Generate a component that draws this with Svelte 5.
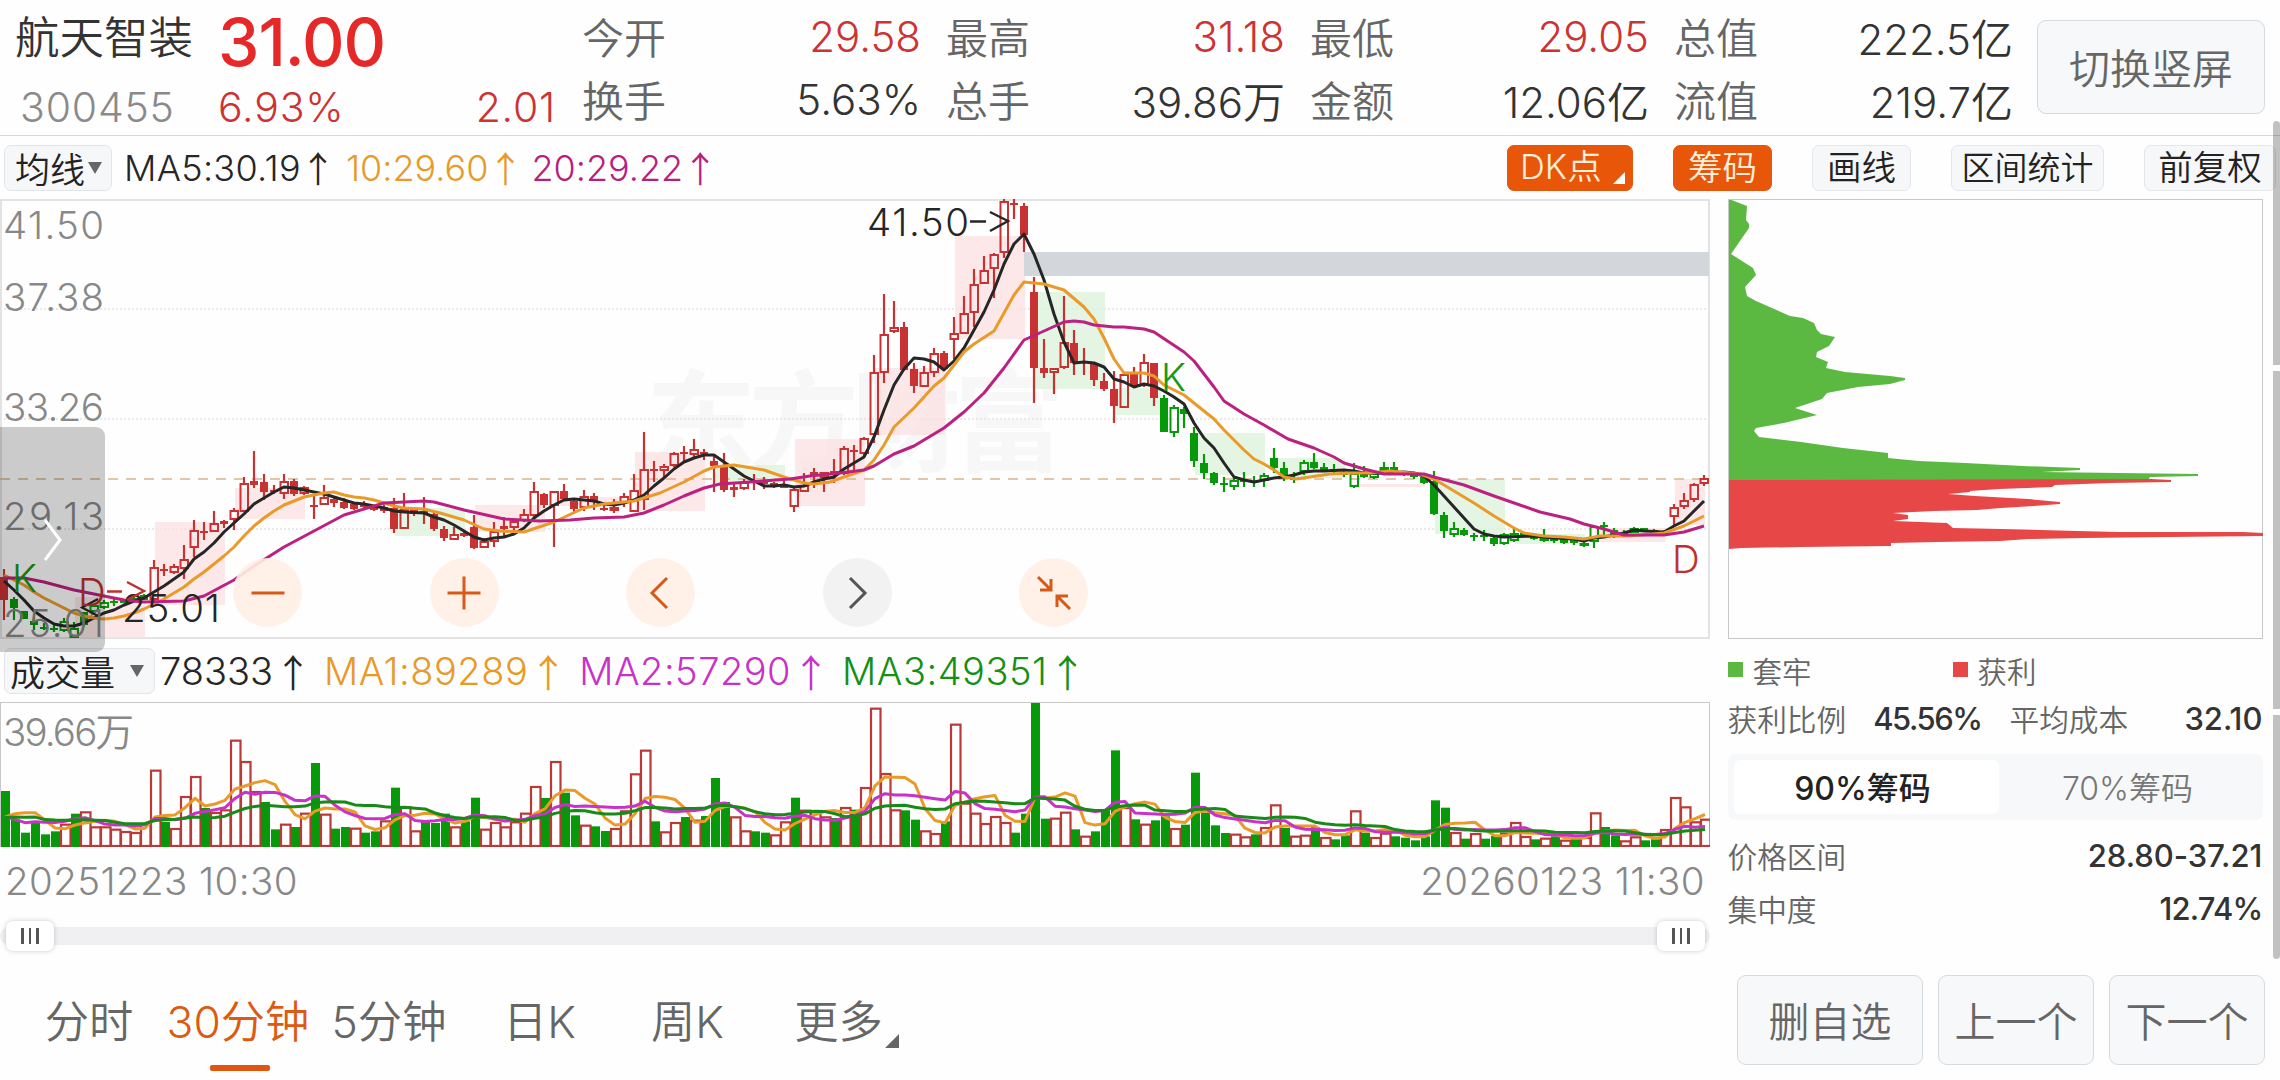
<script>
	const quotes = [
		{ rows: [['今开', '29.58', 'up'], ['换手', '5.63%', '']] },
		{ rows: [['最高', '31.18', 'up'], ['总手', '39.86万', '']] },
		{ rows: [['最低', '29.05', 'up'], ['金额', '12.06亿', '']] },
		{ rows: [['总值', '222.5亿', ''], ['流值', '219.7亿', '']] }
	];

	const tabs = ['分时', '30分钟', '5分钟', '日K', '周K', '更多'];
	let active = '30分钟';

	// high, body top, body bottom, low, kind
	// R/G - hollow body, r/g - filled body
	const candleData = `569 577 600 620 r|597 599 608 620 g|611 611 619 619 g|617 621 625 630 g|623 627 629 630 g|625 628 630 632 g|618 621 631 632 G|622 628 638 638 G|612 612 625 626 g|604 605 612 613 G
600 602 608 609 G|599 601 603 606 g|599 600 603 603 g|597 598 602 602 g|594 595 600 600 g|560 567 600 601 R|564 569 571 576 r|564 566 573 574 R|545 559 569 579 R|520 530 548 557 R
522 531 533 540 r|511 523 532 532 R|520 521 524 528 r|508 510 520 530 R|477 483 512 512 R|451 481 485 488 r|474 482 492 500 r|485 490 492 494 r|474 481 494 499 R|479 481 494 496 r
486 487 494 495 R|495 505 507 519 r|485 497 505 505 R|498 499 503 507 r|498 502 508 509 r|502 504 509 510 r|501 504 507 508 r|505 506 510 511 r|505 507 511 513 r|498 508 529 533 r
493 509 529 529 R|507 508 514 516 r|497 511 513 524 r|513 514 529 531 r|526 529 538 541 r|527 534 540 540 R|531 533 536 537 r|515 527 548 549 r|538 541 548 548 R|522 531 542 547 R
517 526 529 536 r|520 521 528 532 R|509 514 521 522 R|482 491 516 517 R|493 494 505 508 r|491 491 506 547 R|484 491 499 500 r|500 501 509 512 r|490 496 508 511 R|493 496 501 510 r
503 508 510 511 r|499 507 511 513 R|493 496 503 507 R|474 490 512 512 R|432 469 500 510 R|461 469 471 482 r|464 466 471 477 R|452 453 466 467 R|446 452 454 462 r|439 449 455 458 R
449 452 454 460 r|456 461 466 492 r|453 467 490 492 r|483 487 490 497 r|479 482 489 490 R|474 481 483 490 r|477 482 484 489 r|482 483 487 488 r|480 484 488 488 r|486 489 507 512 R
473 485 492 492 R|468 472 475 488 r|472 472 478 492 R|459 471 474 483 r|446 448 474 475 R|445 450 452 472 r|437 438 454 457 R|355 372 435 443 R|294 334 373 383 R|301 327 332 333 R
322 327 370 371 r|363 369 386 393 r|366 372 387 387 R|348 353 373 377 R|351 353 369 370 r|317 333 340 359 R|296 313 334 334 R|269 284 313 327 R|256 270 284 284 R|253 254 269 298 R
199 201 253 258 R|199 203 205 219 r|203 206 235 252 r|277 292 368 403 r|339 368 373 378 r|368 368 373 394 R|296 342 368 369 R|330 343 363 375 r|348 361 363 375 r|362 363 380 386 r
373 381 389 391 r|371 389 406 423 r|373 374 408 408 R|367 373 385 387 r|354 362 386 387 R|363 363 398 406 r|395 398 432 432 g|405 407 433 437 G|407 409 414 428 g|427 433 461 467 g
454 463 473 479 g|472 473 483 485 g|477 483 485 492 g|478 480 487 490 G|472 480 482 487 g|476 481 483 487 g|473 475 481 487 G|448 458 468 473 g|462 468 475 481 g|472 478 480 483 g
460 462 472 475 G|453 462 468 469 g|463 467 470 472 g|464 469 471 473 g|470 472 475 477 g|463 473 487 488 G|466 473 477 478 g|471 473 478 479 G|462 467 471 473 G|462 467 471 473 g
471 472 475 476 g|473 474 477 479 g|476 477 483 484 g|471 481 514 515 g|512 515 531 538 g|522 528 535 537 G|528 530 535 536 g|533 535 537 541 g|530 535 537 541 g|537 538 544 546 g
533 534 544 545 G|528 533 541 542 G|532 533 537 537 g|534 536 539 540 g|529 537 541 542 G|537 539 541 543 g|537 538 543 544 g|539 540 543 545 g|541 543 546 547 G|525 526 542 548 G
522 525 527 537 g|528 530 536 538 g|530 532 536 537 g|527 528 533 533 G|528 528 532 532 g|529 530 533 533 g|530 531 534 535 g|504 507 517 525 R|493 500 507 509 R|483 484 500 502 R
475 478 484 486 R`;

	const candles = candleData.split(/[|\n]/).map((row, i) => {
		const [h, t, b, l, kind] = row.trim().split(' ');
		return {
			x: 4 + i * 10, h: +h, t: +t, b: +b, l: +l,
			color: kind.toLowerCase() == 'r' ? '#c83232' : '#08990a',
			hollow: kind == 'R' || kind == 'G'
		};
	});

	const ma5 = '4,581 14,590 24,600 34,611 44,618 54,624 64,626 74,626 84,623 94,618 104,613 114,610 124,605 134,601 144,598 154,592 164,586 174,579 184,572 194,559 204,552 214,543 224,532 234,523 244,514 254,504 264,498 274,492 284,487 294,488 304,490 314,492 324,494 334,497 344,500 354,503 364,504 374,506 384,508 394,511 404,512 424,513 434,517 444,520 454,525 464,531 474,537 484,540 494,538 504,537 514,534 524,528 534,518 544,511 554,505 564,500 574,499 584,500 594,501 604,504 614,505 624,503 634,500 644,495 654,486 664,478 674,469 684,462 694,458 704,455 714,455 724,462 734,469 744,476 754,481 764,486 774,486 784,485 794,487 804,486 814,482 824,479 834,477 844,469 854,463 864,457 874,437 884,410 894,385 904,369 914,358 924,359 934,362 944,370 954,361 964,348 974,330 984,312 994,290 1004,264 1014,244 1024,234 1034,254 1044,280 1054,314 1064,342 1074,363 1084,362 1094,363 1104,367 1114,379 1124,382 1134,387 1144,384 1154,386 1164,391 1174,397 1184,404 1194,423 1204,438 1214,448 1224,463 1234,477 1244,480 1254,482 1264,480 1274,478 1284,477 1294,475 1304,472 1314,471 1324,471 1344,470 1354,471 1364,473 1384,473 1404,472 1414,473 1424,476 1434,485 1444,496 1454,507 1464,518 1474,529 1484,534 1494,536 1504,537 1534,536 1554,538 1574,539 1584,541 1594,538 1604,537 1624,533 1634,530 1644,531 1664,532 1674,526 1684,521 1694,511 1704,501';
	const ma10 = '4,575 14,580 24,585 34,592 44,598 54,603 64,608 74,613 84,616 94,618 104,619 114,618 124,616 134,613 144,609 154,604 164,599 174,593 184,587 194,579 204,572 214,564 224,556 234,547 244,536 254,526 264,518 274,511 284,505 294,501 304,497 314,495 324,493 334,492 344,495 354,497 364,498 374,500 384,503 394,506 404,508 424,509 440,513 464,520 484,529 500,531 524,532 554,522 584,508 604,504 634,501 660,493 684,482 704,471 714,467 734,465 764,470 784,477 804,483 814,484 830,482 844,477 864,470 874,460 884,445 894,427 914,408 934,386 944,378 964,352 974,344 994,331 1014,295 1024,282 1044,284 1064,290 1084,307 1094,319 1104,338 1114,359 1124,373 1144,373 1154,376 1164,385 1184,395 1214,419 1224,430 1244,450 1254,459 1264,464 1274,470 1284,477 1296,479 1310,477 1330,474 1350,473 1370,473 1390,471 1420,474 1434,479 1454,491 1474,503 1494,516 1514,528 1524,533 1544,536 1564,537 1584,539 1600,536 1630,536 1664,533 1684,526 1704,516';
	const ma20 = '4,578 24,578 44,582 74,590 104,596 124,600 144,602 184,601 204,596 234,580 254,566 284,547 314,531 344,515 384,503 424,501 434,502 464,510 504,519 540,521 570,520 594,518 624,517 644,513 664,505 684,496 704,488 720,484 750,482 790,479 810,476 840,473 864,470 874,466 894,454 914,446 944,428 964,412 984,393 1004,368 1024,340 1044,331 1064,322 1074,321 1084,322 1094,325 1114,327 1124,327 1144,329 1154,332 1184,352 1194,361 1214,387 1224,401 1244,414 1264,425 1288,439 1314,448 1334,457 1344,463 1364,469 1384,474 1424,474 1434,477 1464,485 1494,496 1540,512 1570,519 1584,524 1604,529 1624,535 1664,535 1684,532 1704,526';

	// x, y, width, height of the trend boxes
	const upBoxes = [[75, 597, 70, 41], [155, 522, 70, 83], [235, 488, 70, 31], [475, 505, 70, 27], [555, 497, 70, 9], [635, 452, 70, 59], [795, 439, 70, 67], [875, 368, 70, 67], [955, 236, 70, 103], [1355, 484, 70, 3], [1595, 528, 70, 14], [1675, 479, 30, 46]];
	const downBoxes = [[395, 508, 70, 28], [715, 465, 70, 18], [1035, 292, 70, 97], [1115, 388, 46, 27], [1195, 433, 70, 42], [1275, 458, 70, 20], [1435, 479, 70, 55], [1515, 534, 70, 10]];

	const axis = [['41.50', 239], ['37.38', 311], ['33.26', 421], ['29.13', 530], ['25.01', 637]];

	// distance of each bar's top, in thirds of a pixel; 188 is the top of the pane, 620 its floor
	const volumeData = 'G452 G538 G577 G545 G582 G573 R550 G520 R513 R558 R558 R565 R572 R575 R548 R388 G545 R563 R467 R407 G503 R515 R507 R298 R362 R452 G485 G567 R550 G560 R517 G368 R520 G565 G560 R562 G577 G573 R540 G442 R498 R570 G545 G548 G520 R558 G543 G472 R565 R545 R558 R543 R517 R437 G473 R362 G457 G525 R553 G558 G572 R563 R510 R399 R328 G543 R573 R545 G530 R538 G527 G413 G485 R528 R570 G573 G577 R582 R543 G472 R508 R513 R528 G533 R500 G508 R440 R202 R398 R507 G510 G538 R570 R578 G543 R250 R487 R517 R548 R527 R545 G577 G520 G188 G535 R532 R514 G567 R586 G573 G510 G330 R500 G537 R550 G540 G528 R563 G553 G397 G517 G555 G578 R580 R588 G582 R560 R492 G563 R586 R583 G560 R590 G597 G585 R510 G577 R590 R577 G588 G592 G600 G588 G480 G502 R575 G595 R578 G595 G587 R577 R545 R587 G597 R592 G588 R598 G595 R590 R516 G560 G585 R600 R588 G600 G597 R566 R470 R498 R543 R535';
	const volumes = volumeData.split(' ').map((v, i) => ({ x: i * 10, up: v[0] == 'R', h: (620 - v.slice(1)) / 3 }));

	// bars left of the visible window, needed for the averages
	const before = [60, 60, 60, 190, 75, 85, 85, 85, 90, 85, 150, 145, 50, 50, 55, 32, 28, 75, 147].map((v) => v / 3);

	function average(n) {
		const all = [...before, ...volumes.map((v) => v.h)];
		return volumes.map((v, i) => {
			const end = i + before.length + 1;
			const sum = all.slice(end - n, end).reduce((a, b) => a + b, 0);
			return (v.x + 4) + ',' + (144 - sum / n).toFixed(1);
		}).join(' ');
	}

	const chipsTrapped = '0,0 18,7 17,21 20,25 20,29 2,55 24,69 27,76 16,88 18,97 27,102 61,117 74,119 85,124 88,131 92,135 106,138 100,147 88,153 87,158 99,163 97,169 116,173 161,177 176,179 176,181 161,185 129,188 98,194 93,200 66,209 88,216 55,224 27,229 25,232 30,238 72,243 114,249 159,254 159,259 190,262 236,264 294,267 351,269 351,271 313,273 390,274 469,275 469,277 421,278 419,281 0,281';
	const chipsProfit = '0,281 422,280 442,281 442,283 381,284 326,286 323,288 270,290 241,292 241,293 219,295 246,297 299,300 331,303 331,305 305,307 272,309 248,311 205,312 164,314 179,316 179,320 164,322 218,324 224,329 273,330 348,332 390,333 514,333 534,334 534,337 441,338 355,339 299,340 271,342 209,343 162,344 162,347 72,348 12,349 0,350';
</script>

<main>
	<header>
		<div class="stock">
			<div class="line1">
				<span class="name">航天智装</span>
				<span class="price">31.00</span>
			</div>
			<div class="line2">
				<span class="code">300455</span>
				<span class="percent">6.93%</span>
				<span class="change">2.01</span>
			</div>
		</div>
		{#each quotes as col}
			<div class="quote">
				{#each col.rows as [label, value, cls]}
					<div class="pair"><span class="label">{label}</span><span class="value {cls}">{value}</span></div>
				{/each}
			</div>
		{/each}
		<button class="rotate">切换竖屏</button>
	</header>

	<div class="toolbar">
		<button class="select">均线<i class="caret"></i></button>
		<span class="ma dark">MA5:30.19<b>↑</b></span>
		<span class="ma orange">10:29.60<b>↑</b></span>
		<span class="ma pink">20:29.22<b>↑</b></span>
		<div class="tools">
			<button class="tool on dk">DK点<i class="corner"></i></button>
			<button class="tool on">筹码</button>
			<button class="tool">画线</button>
			<button class="tool long">区间统计</button>
			<button class="tool last">前复权</button>
		</div>
	</div>

	<div class="body">
		<section class="charts">
			<div class="kline">
				<svg width="1710" height="440" viewBox="0 199 1710 440">
					<text class="watermark" x="646" y="463" textLength="418">东方财富</text>
					{#each [309, 419, 529] as y}
						<line x1="0" x2="1709" y1={y} y2={y} stroke="#e2e2e2" stroke-width="1.5" stroke-dasharray="2 2" />
					{/each}
					{#each upBoxes as [x, y, w, h]}
						<rect {x} {y} width={w} height={h} fill="#fbe0e0" fill-opacity=".75" />
					{/each}
					{#each downBoxes as [x, y, w, h]}
						<rect {x} {y} width={w} height={h} fill="#def3dd" fill-opacity=".8" />
					{/each}
					<rect x="1024" y="252" width="685" height="24" fill="#d3d7dc" />
					<line x1="0" x2="1709" y1="479" y2="479" stroke="#d9b48c" stroke-width="1.6" stroke-dasharray="10 8" />
					{#each candles as c}
						<line x1={c.x} x2={c.x} y1={c.h} y2={c.hollow ? c.t : c.l} stroke={c.color} stroke-width="2.2" />
						{#if c.hollow}
							<line x1={c.x} x2={c.x} y1={c.b} y2={c.l} stroke={c.color} stroke-width="2.2" />
							<rect x={c.x - 3.5} y={c.t + 1} width="7.5" height={Math.max(c.b - c.t - 2, 1)} fill="none" stroke={c.color} stroke-width="2" />
						{:else}
							<rect x={c.x - 4} y={c.t} width="8" height={c.b - c.t} fill={c.color} />
						{/if}
					{/each}
					<g fill="none" stroke-width="3" stroke-linejoin="round">
						<polyline points={ma5} stroke="#262626" />
						<polyline points={ma10} stroke="#ea9a28" />
						<polyline points={ma20} stroke="#bc2080" />
					</g>
					{#each axis as [label, y]}
						<text class="axis" x="3" {y} textLength="101">{label}</text>
					{/each}
					<g class="mark" fill="#262626">
						<text x="867" y="236" textLength="102">41.50</text>
						<path d="M970 221.5H986M990 212L1008 221L990 231" fill="none" stroke="#262626" stroke-width="2.4" />
						<text x="122" y="622" textLength="98">25.01</text>
						<path d="M98 599L82 607.5L98 616" fill="none" stroke="#262626" stroke-width="2.2" />
						<text x="12" y="592" fill="#159a15">K</text>
						<text x="1161" y="391" fill="#159a15">K</text>
						<text x="78" y="606" fill="#c03030">D</text>
						<path d="M107 591.5H122M127 582L144 591L127 600" fill="none" stroke="#c03030" stroke-width="2.4" />
						<text x="1672" y="573" fill="#c03030">D</text>
					</g>
				</svg>
				<div class="actions">
					<button class="round"><svg width="36" height="36"><path d="M1.5 18H34.5" /></svg></button>
					<button class="round"><svg width="36" height="36"><path d="M1.5 18H34.5M18 1.5V34.5" /></svg></button>
					<button class="round"><svg width="36" height="36"><path d="M24 3L9 18L24 33" /></svg></button>
					<button class="round grey"><svg width="36" height="36"><path d="M11 3L26 18L11 33" /></svg></button>
					<button class="round"><svg width="36" height="36"><path d="M2 2L15 15M15 4V15H4M34 34L21 21M21 32V21H32" /></svg></button>
				</div>
				<div class="drawer"><svg width="20" height="42"><path d="M2 1L17 21L2 41" /></svg></div>
			</div>

			<div class="toolbar vol">
				<button class="select">成交量<i class="caret"></i></button>
				<span class="ma dark">78333<b>↑</b></span>
				<span class="ma orange">MA1:89289<b>↑</b></span>
				<span class="ma violet">MA2:57290<b>↑</b></span>
				<span class="ma green">MA3:49351<b>↑</b></span>
			</div>

			<div class="volume">
				<svg width="1709" height="144">
					<text class="axis" x="2" y="43" textLength="131">39.66万</text>
					{#each volumes as v}
						{#if v.up}
							<rect x={v.x} y={145 - v.h} width="9.5" height={v.h - 2} fill="#fff" stroke="#b93a36" stroke-width="2.2" />
						{:else}
							<rect x={v.x} y={144 - v.h} width="9" height={v.h} fill="#08990a" />
						{/if}
					{/each}
					<g fill="none" stroke-width="3" stroke-linejoin="round">
						<polyline points={average(5)} stroke="#ea9a28" />
						<polyline points={average(10)} stroke="#c832c8" />
						<polyline points={average(20)} stroke="#188a18" />
					</g>
				</svg>
			</div>

			<div class="dates"><span>20251223 10:30</span><span>20260123 11:30</span></div>
			<div class="slider">
				<span class="handle"><i></i><i></i><i></i></span>
				<span class="handle"><i></i><i></i><i></i></span>
			</div>
		</section>

		<aside>
			<div class="chips">
				<svg width="534" height="438" viewBox="0 1 534 438">
					<polygon points={chipsTrapped} fill="#5bb942" />
					<polygon points={chipsProfit} fill="#e84747" />
				</svg>
			</div>
			<div class="legend">
				<span><i class="trapped"></i>套牢</span>
				<span><i class="profit"></i>获利</span>
			</div>
			<div class="stat first">
				<div class="ratio"><span>获利比例</span><strong>45.56%</strong></div>
				<div class="cost"><span>平均成本</span><strong>32.10</strong></div>
			</div>
			<div class="switch">
				<button class="current">90%筹码</button>
				<button>70%筹码</button>
			</div>
			<div class="stat"><span>价格区间</span><strong>28.80-37.21</strong></div>
			<div class="stat"><span>集中度</span><strong class="narrow">12.74%</strong></div>
		</aside>
	</div>

	<footer>
		<nav>
			{#each tabs as tab}
				<button class:active={active == tab} class:more={tab == '更多'} on:click={() => (active = tab)}>{tab}</button>
			{/each}
		</nav>
		<div class="moves">
			<button class="wide">删自选</button>
			<button>上一个</button>
			<button>下一个</button>
		</div>
	</footer>

	<div class="scrollbar"><i></i><i></i><i></i></div>
</main>

<style>
	:global(body) {
		background: #fefefe;
		overflow: hidden;
	}

	main {
		position: relative;
		width: 2280px;
		height: 1080px;
		overflow: hidden;
		font-family: Inter, "Noto Sans CJK SC", sans-serif;
		font-weight: 350;
		color: #333;
		font-feature-settings: "calt" 0;
	}

	main, main * {
		box-sizing: border-box;
	}

	svg {
		display: block;
	}

	button {
		font: inherit;
		color: inherit;
		padding: 0;
		border: 0;
		background: none;
		white-space: nowrap;
	}

	header {
		display: flex;
		height: 136px;
		border-bottom: 1.5px solid #d8d8d8;
	}

	.stock {
		width: 556px;
		padding-left: 15px;
	}

	.line1, .line2 {
		display: flex;
		align-items: center;
	}

	.line1 {
		height: 84px;
	}

	.line2 {
		height: 46px;
		font-size: 41px;
		letter-spacing: .8px;
		color: #c33;
	}

	.name {
		width: 203px;
		font-size: 44.5px;
		margin-top: -16px;
	}

	.price {
		font-size: 66px;
		font-weight: 550;
		color: #e62828;
		letter-spacing: -1px;
	}

	.code {
		width: 203px;
		padding-left: 5px;
		color: #8a8a8a;
	}

	.change {
		margin-left: auto;
	}

	.quote {
		width: 339px;
		margin-left: 26px;
		padding-top: 5px;
		font-size: 42px;
	}

	.quote + .quote {
		margin-left: 25px;
	}

	.pair {
		display: flex;
		justify-content: space-between;
		align-items: center;
		height: 63px;
	}

	.label {
		margin-top: -3px;
		color: #666;
	}

	.up {
		color: #c33;
	}

	.rotate {
		width: 228px;
		height: 94px;
		margin: 20px 15px 0 auto;
		padding-bottom: 3px;
		border: 1.5px solid #d5dade;
		border-radius: 9px;
		background: #f7f8fa;
		font-size: 41px;
		color: #666;
	}

	.toolbar {
		display: flex;
		align-items: center;
		height: 63px;
		padding-left: 4px;
		font-size: 36px;
	}

	.toolbar.vol {
		font-size: 38px;
	}

	.select {
		display: flex;
		align-items: center;
		width: 108px;
		height: 46px;
		padding-left: 10px;
		border: 1.5px solid #e1e4e8;
		border-radius: 7px;
		background: #f6f7f9;
		font-size: 35px;
		color: #222;
	}

	.vol .select {
		width: 151px;
		padding-left: 5px;
	}

	.caret {
		margin-left: 3px;
		border: 7px solid transparent;
		border-top: 12px solid #666;
		border-bottom: 0;
	}

	.vol .caret {
		margin-left: 15px;
	}

	.ma {
		display: flex;
		margin-left: 12px;
		white-space: nowrap;
	}

	.dark { color: #262626; margin-left: 12px; }
	.orange { color: #e89a28; }
	.pink { color: #b81e80; }
	.violet { color: #c832c8; }
	.green { color: #159015; }

	.toolbar:not(.vol) .dark {
		letter-spacing: .3px;
	}

	.toolbar:not(.vol) .orange {
		margin-left: 14px;
	}

	.vol .dark { margin-left: 5px; }
	.vol .ma + .ma {
		margin-left: 18px;
		letter-spacing: .5px;
	}

	.ma b {
		width: 27px;
		margin-left: 4px;
		font-family: "Noto Sans CJK SC";
		font-weight: 350;
		text-indent: -5px;
		line-height: 1.2;
	}

	.vol .ma b {
		margin-left: 6px;
	}

	.tools {
		display: flex;
		gap: 40px;
		margin: 0 4px 0 auto;
	}

	.tool {
		width: 99px;
		height: 46px;
		border: 1.5px solid #e4e6ea;
		border-radius: 7px;
		background: #f6f7f9;
		font-size: 34.5px;
		line-height: 42px;
		color: #222;
	}

	.long {
		width: 153px;
		font-size: 33px;
	}

	.last {
		width: 132px;
	}

	.on {
		border-color: #e8560a;
		background: #e8560a;
		color: #fff0dc;
	}

	.dk {
		display: flex;
		width: 126px;
		padding-left: 12px;
	}

	.corner {
		align-self: flex-end;
		margin: 0 0 6px 11px;
		border-bottom: 12px solid #fff;
		border-left: 12px solid transparent;
	}

	.body {
		display: flex;
		height: 760px;
	}

	.charts {
		width: 1710px;
	}

	.kline {
		position: relative;
		height: 440px;
		box-shadow: inset 0 0 0 2px #e3e3e3;
	}

	.watermark {
		font-size: 110px;
		font-weight: 700;
		fill: #f7f7f7;
	}

	.axis {
		font-size: 38.5px;
		fill: #888;
	}

	.mark text {
		font-size: 38.5px;
	}

	.actions {
		position: absolute;
		left: 233px;
		top: 359px;
		display: flex;
		gap: 127.6px;
	}

	.round {
		display: grid;
		place-items: center;
		width: 69px;
		height: 69px;
		border-radius: 50%;
		background: rgba(255, 239, 230, .9);
	}

	.round path {
		fill: none;
		stroke: #d55a1a;
		stroke-width: 3;
	}

	.grey {
		background: #f2f2f2;
	}

	.grey path {
		stroke: #555;
	}

	.drawer {
		position: absolute;
		left: 0;
		top: 228px;
		display: grid;
		place-items: center;
		width: 105px;
		height: 225px;
		border-radius: 0 9px 9px 0;
		background: rgba(0, 0, 0, .2);
	}

	.drawer path {
		fill: none;
		stroke: #fff;
		stroke-width: 3;
	}

	.volume {
		height: 145px;
		border: 1.5px solid #c8c8c8;
	}

	.dates {
		display: flex;
		justify-content: space-between;
		padding: 11px 5px 0;
		font-size: 38.5px;
		letter-spacing: .4px;
		color: #888;
	}

	.slider {
		display: flex;
		justify-content: space-between;
		align-items: center;
		height: 18px;
		margin-top: 23px;
		padding: 0 5px 0 6px;
		border-radius: 9px;
		background: #f0f0f3;
	}

	.handle {
		display: flex;
		justify-content: center;
		align-items: center;
		gap: 5px;
		width: 48px;
		height: 30px;
		border-radius: 7px;
		background: #fff;
		box-shadow: 0 0 5px rgba(0, 0, 0, .2);
	}

	.handle i {
		width: 2.5px;
		height: 16px;
		background: #555;
	}

	aside {
		width: 535px;
		margin-left: 17.5px;
	}

	.chips {
		height: 440px;
		border: 1.5px solid #c8c8c8;
	}

	.legend {
		display: flex;
		height: 61px;
		font-size: 29.5px;
		color: #666;
	}

	.legend span {
		display: flex;
		align-items: center;
		width: 225px;
	}

	.legend i {
		width: 15px;
		height: 15px;
		margin-right: 10px;
	}

	.trapped { background: #5bb942; }
	.profit { background: #e84747; }

	.stat, .stat div {
		display: flex;
		justify-content: space-between;
		align-items: center;
	}

	.stat {
		height: 53px;
		font-size: 29.7px;
		color: #666;
	}

	.stat.first {
		height: 37px;
	}

	.ratio {
		width: 254px;
	}

	.cost {
		width: 253px;
	}

	.stat strong {
		font-size: 31px;
		font-weight: 500;
		color: #333;
	}

	.ratio strong {
		letter-spacing: -1.5px;
	}

	.stat .narrow {
		letter-spacing: -.8px;
	}

	.switch {
		display: flex;
		height: 66px;
		margin: 17px 0 9px;
		padding: 6px;
		border-radius: 7px;
		background: #f7f8fa;
	}

	.switch button {
		flex: 1;
		padding-bottom: 2px;
		border-radius: 6px;
		font-size: 32px;
		color: #777;
	}

	.switch .current {
		padding-right: 7px;
		background: #fff;
		font-weight: 500;
		color: #222;
	}

	footer {
		display: flex;
		justify-content: space-between;
		padding: 16px 15px 0 26px;
		font-size: 44.3px;
		color: #666;
	}

	nav {
		display: flex;
		height: 98px;
	}

	nav button {
		position: relative;
		width: 126px;
		height: 95px;
		padding-bottom: 8px;
	}

	nav button:nth-child(n + 2) { width: 172px; }
	nav button:nth-child(3) { width: 130px; }
	nav button:nth-child(4) { width: 171px; }
	nav button:nth-child(5) { width: 125px; }
	nav button:nth-child(6) { width: 177px; }

	.active {
		color: #dc5a12;
	}

	.active::after {
		content: "";
		position: absolute;
		left: 58px;
		bottom: -1px;
		width: 60px;
		height: 6px;
		border-radius: 2px;
		background: #e0560f;
	}

	.more::after {
		content: "";
		position: absolute;
		left: 135px;
		top: 59px;
		border-bottom: 14px solid #666;
		border-left: 14px solid transparent;
	}

	.moves {
		display: flex;
		gap: 15px;
	}

	.moves button {
		width: 156px;
		height: 90px;
		padding-bottom: 3px;
		border: 1.5px solid #d5dade;
		border-radius: 9px;
		background: #f7f8fa;
		font-size: 41px;
	}

	.moves .wide {
		width: 186px;
	}

	.scrollbar {
		position: absolute;
		right: 0;
		top: 121px;
		display: flex;
		flex-direction: column;
		gap: 6px;
		width: 7px;
		height: 838px;
		border-radius: 4px;
		overflow: hidden;
	}

	.scrollbar i {
		height: 244px;
		background: rgba(0, 0, 0, .24);
	}

	.scrollbar i:nth-child(2) {
		height: 338px;
	}
</style>
